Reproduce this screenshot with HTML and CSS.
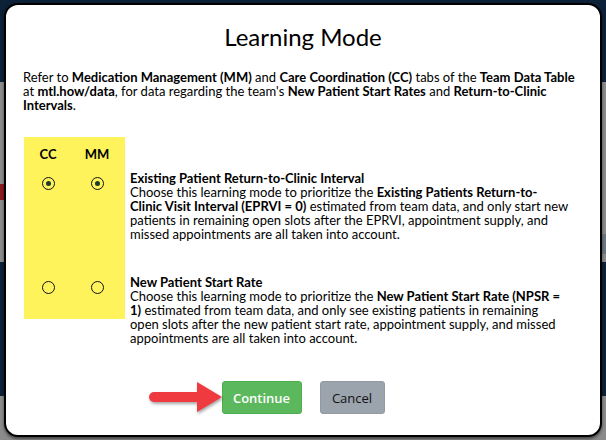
FILE: index.html
```html
<!DOCTYPE html>
<html>
<head>
<meta charset="utf-8">
<link rel="stylesheet" href="styles.css">
</head>
<body>
<div class="stage">
  <div class="modal">
    <h1 class="title">Learning Mode</h1>
    <p class="intro">Refer to <b>Medication Management (MM)</b> and <b>Care Coordination (CC)</b> tabs of the <b>Team Data Table</b><br>at <b>mtl.how/data</b>, for data regarding the team's <b>New Patient Start Rates</b> and <b>Return-to-Clinic</b><br><b>Intervals</b>.</p>
    <div class="modes">
      <div class="ycell head"><span>CC</span><span>MM</span></div>
      <div></div>
      <div class="ycell radios"><span class="radio on"></span><span class="radio on"></span></div>
      <div class="opt first">
        <b>Existing Patient Return-to-Clinic Interval</b><br>
        Choose this learning mode to prioritize the <b>Existing Patients Return-to-<br>Clinic Visit Interval (EPRVI = 0)</b> estimated from team data, and only start new<br>patients in remaining open slots after the EPRVI, appointment supply, and<br>missed appointments are all taken into account.
      </div>
      <div class="ycell radios last"><span class="radio"></span><span class="radio"></span></div>
      <div class="opt">
        <b>New Patient Start Rate</b><br>
        Choose this learning mode to prioritize the <b>New Patient Start Rate (NPSR =<br>1)</b> estimated from team data, and only see existing patients in remaining<br>open slots after the new patient start rate, appointment supply, and missed<br>appointments are all taken into account.
      </div>
    </div>
    <div class="actions">
      <button class="btn btn-go">Continue</button>
      <button class="btn btn-cancel">Cancel</button>
      <svg class="arrow" width="80" height="36" viewBox="0 0 80 36">
        <line x1="6" y1="17" x2="52" y2="17" stroke="#ef3b3f" stroke-width="10" stroke-linecap="round"/>
        <polygon points="49,2 74,17 49,32" fill="#ef3b3f"/>
      </svg>
    </div>
  </div>
</div>
</body>
</html>
```
FILE: styles.css
```css
* { box-sizing: border-box; }
html, body { margin: 0; padding: 0; }
body {
  width: 606px;
  height: 440px;
  overflow: hidden;
  background:
    linear-gradient(#8a1b22, #8a1b22) 0 184px / 4px 16px no-repeat,
    linear-gradient(#6f7780, #6f7780) 600px 234px / 6px 20px no-repeat,
    linear-gradient(to bottom, #0c2138 0 82px, #8b8b8b 82px 262px, #0c2138 262px 396px, #8b8b8b 396px);
  font-family: Lato, "Liberation Sans", sans-serif;
  color: #000;
}
.stage {
  padding: 3px 4px 3px 4px;
}
.modal {
  height: 434px;
  background: #fff;
  border: 2px solid #000;
  border-radius: 14px;
  box-shadow: 0 2px 3px rgba(0,0,0,.5);
  padding: 0 16px;
}
.title {
  margin: 17px 0 0;
  font-size: 24px;
  line-height: 30px;
  font-weight: 400;
  text-align: center;
}
.intro {
  margin: 18px 0 0 1px;
  font-size: 13px;
  line-height: 14px;
  white-space: nowrap;
}
b { font-weight: 700; }
.modes {
  margin: 25px 0 0 2px;
  display: grid;
  grid-template-columns: 101px 1fr;
  column-gap: 5px;
  font-size: 13px;
  line-height: 14px;
}
.ycell {
  background: #fff35b;
  display: grid;
  grid-template-columns: 48px 50px;
  justify-items: center;
  align-items: start;
}
.head {
  height: 34px;
  padding-top: 10px;
  font-weight: 700;
}
.radios { padding-top: 6px; }
.radios.last { height: 44px; align-self: start; }
.radio {
  width: 13px;
  height: 13px;
  border: 1px solid #111;
  border-radius: 50%;
  display: flex;
  align-items: center;
  justify-content: center;
}
.radio.on::after {
  content: "";
  width: 5px;
  height: 5px;
  border-radius: 50%;
  background: #173d2b;
}
.opt { white-space: nowrap; }
.opt.first { padding-bottom: 34px; }
.actions {
  position: relative;
  margin-top: 36px;
  display: flex;
  justify-content: center;
  gap: 18px;
}
.btn {
  height: 33px;
  border-radius: 3px;
  font-family: "Open Sans", "Noto Sans", sans-serif;
  font-size: 13px;
  padding: 0;
  border: 1px solid transparent;
}
.btn-go {
  width: 80px;
  background: #5cb85c;
  border-color: #4cae4c;
  color: #fff;
  font-weight: 600;
}
.btn-cancel {
  width: 65px;
  background: #9ba3ac;
  border-color: #929aa3;
  color: #111;
}
.arrow {
  position: absolute;
  left: 126px;
  top: -1px;
  filter: drop-shadow(1px 2px 1.5px rgba(0,0,0,.35));
}
```
